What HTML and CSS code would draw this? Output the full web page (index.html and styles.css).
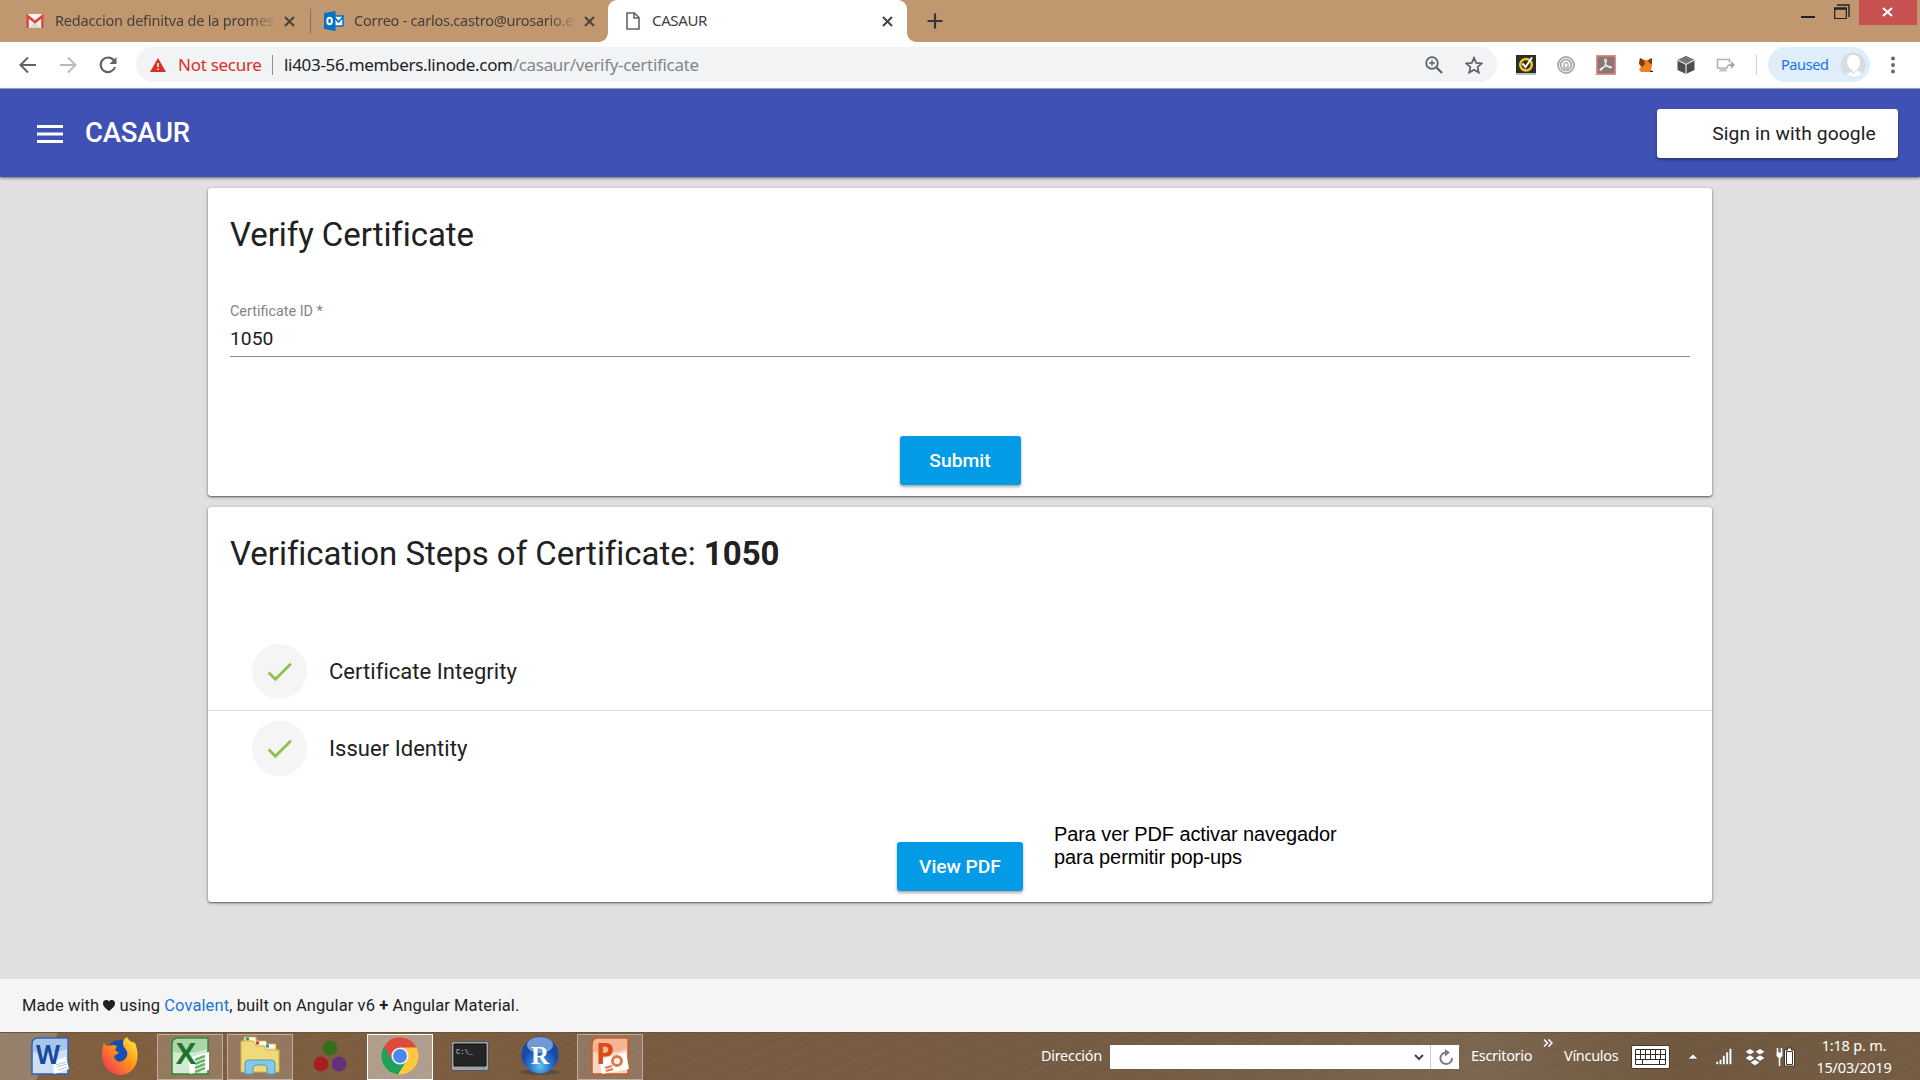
FILE: index.html
```html
<!DOCTYPE html>
<html lang="en">
<head>
<meta charset="utf-8">
<title>CASAUR</title>
<link rel="stylesheet" href="styles.css">
</head>
<body>
<div class="screen">
  <div class="tabs">
    <div class="tab tab-mail">
      <svg class="ico" width="18" height="16" viewBox="0 0 18 16"><rect width="18" height="14" y="1" rx="1" fill="#f3f1ee"/><path d="M3 15 9 9l6 6" fill="#ddd8d4"/><path d="M1.500 15V3L9 9l7.500-6v12" fill="none" stroke="#d9453a" stroke-width="2.600"/></svg>
      <span class="tab-text t1">Redaccion definitva de la promes</span>
      <svg class="x" width="11" height="11" viewBox="0 0 11 11"><path d="M1 1l9 9M10 1l-9 9"/></svg>
    </div>
    <div class="tab-sep"></div>
    <div class="tab tab-outlook">
      <svg class="ico" width="20" height="20" viewBox="0 0 20 20"><path d="M9 5h10v10H9z" fill="#fff" stroke="#0072c6" stroke-width="1.500"/><path d="M11 7l3.500 4L19 6" fill="none" stroke="#0072c6" stroke-width="1.800"/><path d="M0 2 11.500 0v20L0 18z" fill="#0072c6"/><ellipse cx="5.600" cy="10" rx="2.300" ry="3.200" fill="none" stroke="#fff" stroke-width="2"/></svg>
      <span class="tab-text t2">Correo - carlos.castro@urosario.e</span>
      <svg class="x" width="11" height="11" viewBox="0 0 11 11"><path d="M1 1l9 9M10 1l-9 9"/></svg>
    </div>
    <div class="tab tab-active">
      <svg class="ico" width="14" height="18" viewBox="0 0 14 18"><path d="M1 1h7.500L13 5.500V17H1zM8 1v5h5" fill="none" stroke="#5f6368" stroke-width="1.600"/></svg>
      <span class="tab-text t3">CASAUR</span>
      <svg class="x" width="11" height="11" viewBox="0 0 11 11"><path d="M1 1l9 9M10 1l-9 9"/></svg>
    </div>
    <svg class="plus" width="16" height="16" viewBox="0 0 16 16"><path d="M8 .5v15M.5 8h15" stroke="#32363a" stroke-width="2.200"/></svg>
    <div class="window-buttons">
      <svg width="14" height="20" viewBox="0 0 14 20"><path d="M0 17h14" stroke="#222" stroke-width="2"/></svg>
      <svg class="restore" width="16" height="16" viewBox="0 0 16 16"><path d="M3 1h12v12" fill="none" stroke="#222" stroke-width="1.400"/><path d="M.7 4.500h11.600v10H.7z" fill="none" stroke="#222" stroke-width="1.200"/><path d="M0 4.500h13" stroke="#222" stroke-width="2.500"/></svg>
      <div class="close"><svg width="11" height="10" viewBox="0 0 11 10"><path d="M1 1l9 8M10 1l-9 8" stroke="#fff" stroke-width="2.200"/></svg></div>
    </div>
  </div>

  <div class="toolbar">
    <svg class="nav-ico" width="18" height="18" viewBox="0 0 18 18"><path d="M17 9H2M9 1.500 1.500 9 9 16.500" fill="none" stroke="#5f6368" stroke-width="2"/></svg>
    <svg class="nav-ico" width="18" height="18" viewBox="0 0 18 18"><path d="M1 9h15M9 1.500 16.500 9 9 16.500" fill="none" stroke="#bababc" stroke-width="2"/></svg>
    <svg class="nav-ico" width="18" height="18" viewBox="0 0 18 18"><path d="M14.800 4.300A7.300 7.300 0 1 0 16 11" fill="none" stroke="#5f6368" stroke-width="2.200"/><path d="M17.500 1v7h-7z" fill="#5f6368"/></svg>
    <div class="omnibox">
      <svg width="16" height="14" viewBox="0 0 16 14"><path d="M8 0l8 14H0z" fill="#d93025"/><path d="M8 5v4M8 10.500v1.500" stroke="#fff" stroke-width="1.600"/></svg>
      <span class="not-secure">Not secure</span>
      <span class="url-sep"></span>
      <span class="url">li403-56.members.linode.com<span class="path">/casaur/verify-certificate</span></span>
      <svg class="mag" width="18" height="18" viewBox="0 0 18 18"><circle cx="7" cy="7" r="5.800" fill="none" stroke="#5f6368" stroke-width="1.800"/><path d="M11.500 11.500 17 17" stroke="#5f6368" stroke-width="2.200"/><path d="M4.200 7h5.600M7 4.200v5.600" stroke="#5f6368" stroke-width="1.400"/></svg>
      <svg width="18" height="18" viewBox="0 0 18 18"><path d="M9 1.800l2.200 5.100 5.600.5-4.200 3.700 1.200 5.500L9 13.700l-4.800 2.900 1.200-5.500L1.200 7.400l5.600-.5z" fill="none" stroke="#5f6368" stroke-width="1.700"/></svg>
    </div>
    <div class="extensions">
      <svg width="20" height="20" viewBox="0 0 20 20"><path d="M0 0h20v18H0z" fill="#2d2d2f"/><path d="M0 18h20v2H0z" fill="#bbb"/><circle cx="10" cy="9.700" r="5.800" fill="none" stroke="#f9c51c" stroke-width="2.500"/><path d="M6.500 8.500 9.500 12 16 2.500" fill="none" stroke="#fff" stroke-width="2"/></svg>
      <svg width="20" height="20" viewBox="0 0 20 20"><g fill="none" stroke="#acacac"><circle cx="10" cy="10" r="8" stroke-width="2"/><circle cx="10" cy="10" r="5.300" stroke-width="1.800"/></g><path d="M8 13V9.500a2 2 0 1 1 4 0V13z" fill="#fff" stroke="#888"/></svg>
      <svg width="20" height="20" viewBox="0 0 20 20"><path d="M.7.7h18.600v18.600H.7z" fill="#8a7775" stroke="#ef8c84" stroke-width="1.400"/><path d="M9.500 4c1.500 0 1 4-1 7s-4 5-4.500 4 3-3 6-3.500 6 0 5.500 1-4-.5-5.500-3-1.500-5.500-.5-5.500z" fill="none" stroke="#f2eeee" stroke-width="1.100"/></svg>
      <svg width="20" height="20" viewBox="0 0 20 20"><path d="M4 3l3 2h6l3-2v7l-1 5 2 1-3 1H5l-2-3 2-2-2-4z" fill="#ef8220"/><path d="M4 3l4 2 1 4-3 3-3-3zM12 5l4-2v6l-3-1z" fill="#763d16"/><path d="M14 16.500h3" stroke="#222"/></svg>
      <svg width="20" height="20" viewBox="0 0 20 20"><path d="M10 1l8.500 4v10L10 19l-8.500-4V5z" fill="#4d4d4f"/><path d="M2 5 10 1.300 18 5l-8 4z" fill="#777"/><path d="M1.500 5l8.500 4.500L18.500 5M10 9.500V19" fill="none" stroke="#eee" stroke-width="1.100"/></svg>
      <svg width="20" height="20" viewBox="0 0 20 20"><path d="M12 13H1.500V4.500h12v3" fill="none" stroke="#b3b3b3" stroke-width="1.600"/><path d="M3 16.500h8l-1-3H4z" fill="#c4c4c4"/><path d="M10 13c1-3 2-4 5-4V6l4 4-4 4v-3c-2 0-3 0-5 2z" fill="#a5a5a5"/></svg>
    </div>
    <span class="ext-sep"></span>
    <div class="profile"><span>Paused</span><svg width="26" height="26" viewBox="0 0 26 26"><circle cx="13" cy="13" r="12.500" fill="#d9dcdf"/><path d="M12 18c-6-2-7-15 1-15s9 10 4 15l5 4q-9 6-16 0l5-2z" fill="#fff"/><path d="M12 18l1 4 4-4" fill="none" stroke="#d5d8da"/></svg></div>
    <svg width="4" height="18" viewBox="0 0 4 18" fill="#5f6368"><circle cx="2" cy="2.500" r="1.900"/><circle cx="2" cy="9" r="1.900"/><circle cx="2" cy="15.500" r="1.900"/></svg>
  </div>

  <header class="app-bar">
    <svg width="26" height="18" viewBox="0 0 26 18"><path d="M0 1.500h26M0 9h26M0 16.500h26" stroke="#fff" stroke-width="2.800"/></svg>
    <span class="brand">CASAUR</span>
    <button class="google">Sign in with google</button>
  </header>

  <main class="content">
    <section class="card verify">
      <h1>Verify Certificate</h1>
      <label class="field"><span class="label">Certificate ID *</span><span class="value">1050</span></label>
      <button class="primary submit">Submit</button>
    </section>
    <section class="card steps">
      <h1>Verification Steps of Certificate: <b>1050</b></h1>
      <div class="list">
        <div class="row"><span class="avatar"><svg width="33" height="33" viewBox="0 0 24 24"><path d="M9 16.170 4.830 12l-1.420 1.410L9 19 21 7l-1.410-1.410z" fill="#8bc34a"/></svg></span><span>Certificate Integrity</span></div>
        <div class="row"><span class="avatar"><svg width="33" height="33" viewBox="0 0 24 24"><path d="M9 16.170 4.830 12l-1.420 1.410L9 19 21 7l-1.410-1.410z" fill="#8bc34a"/></svg></span><span>Issuer Identity</span></div>
      </div>
      <button class="primary pdf">View PDF</button>
      <p class="note">Para ver PDF activar navegador<br>para permitir pop-ups</p>
    </section>
  </main>

  <footer class="credits">
    <span>Made with <svg width="12" height="11" viewBox="0 0 12 11"><path d="M6 11C1 7 0 5.500 0 3.200 0 0 4 -1 6 1.500 8-1 12 0 12 3.200 12 5.500 11 7 6 11z" fill="#212121"/></svg> using <a>Covalent</a>, built on Angular v6 <b>+</b> Angular Material.</span>
  </footer>

  <div class="taskbar">
    <div class="apps">
      <div class="app"><svg width="38" height="38" viewBox="0 0 38 38"><path d="M7 1h30v36H1V8q0-7 6-7z" fill="#cfe0f5" stroke="#2d62b3" stroke-width="1.500"/><path d="M8 2h28v10Q20 18 2 15V8q0-6 6-6z" fill="#a8c6ec"/><path d="m22 24 13-4 3 12-15 5z" fill="#fff"/><text x="5" y="27" class="glyph" font-size="27" textLength="24" lengthAdjust="spacingAndGlyphs" fill="#174a9c">W</text><path d="m25 28 10-3m-9 5 10-3m-9 6 10-3" stroke="#b4c4dc"/></svg></div>
      <div class="app"><svg width="38" height="38" viewBox="0 0 38 38"><defs><linearGradient id="ff" x1="1" y1="0" x2="0" y2="1"><stop offset="0" stop-color="#fff34a"/><stop offset=".45" stop-color="#ff9417"/><stop offset="1" stop-color="#f0216a"/></linearGradient></defs><circle cx="19" cy="17" r="14" fill="#164fb2"/><path d="M3 6c1 2 2 2 3 3l6-1 4 1-2 4 4 3-5 3c1 6 6 7 10 4 5-4 4-9 0-13-2-4-1-8 3-10 2 4 5 5 8 6 6 13 2 32-15 32C2 37-2 19 3 6z" fill="url(#ff)"/></svg></div>
      <div class="app open"><svg width="38" height="38" viewBox="0 0 38 38"><path d="M7 1h30v36H1V8q0-7 6-7z" fill="#d2ead0" stroke="#31853a" stroke-width="1.500"/><path d="M8 2h28v10Q20 18 2 15V8q0-6 6-6z" fill="#abd6a6"/><path d="m17 21 21-6v18l-19 4z" fill="#fff"/><path d="m24 23 10-4m-10 8 10-4m-10 8 10-4m-10 8 10-4" stroke="#6ab36c" stroke-width="2.500"/><text x="5" y="27" class="glyph" font-size="28" textLength="20" lengthAdjust="spacingAndGlyphs" fill="#1f7331">X</text></svg></div>
      <div class="app open"><svg width="40" height="40" viewBox="0 0 40 40"><path d="M4 1h12l1 4h9l1 3h9v12H4z" fill="#f7e7aa" stroke="#c9a53c"/><path d="M7 3h8M18 7h8M27 10h8" stroke="#fff" stroke-width="3"/><path d="M6 3h3" stroke="#3a9c40" stroke-width="3"/><path d="M16 7h3" stroke="#d33" stroke-width="3"/><path d="M26 10h3" stroke="#278ac9" stroke-width="3"/><path d="M1 5h12l3 5h8l2 4h13v22H1z" fill="#f0d978" stroke="#d2b24c"/><path d="M5 38V27q0-3 4-3h22q4 0 4 3v11h-8v-6q0-3-3-3h-7q-4 0-4 3v6z" fill="#83c8e7" stroke="#479fca"/></svg></div>
      <div class="app"><svg width="34" height="34" viewBox="0 0 34 34"><circle cx="17" cy="9" r="7.500" fill="#36701b"/><circle cx="8" cy="25" r="7.500" fill="#a71e1c"/><circle cx="26" cy="25" r="7.500" fill="#65307b"/></svg></div>
      <div class="app open current"><svg width="38" height="38" viewBox="0 0 38 38"><circle cx="19" cy="19" r="18.500" fill="#fbc93e"/><path d="M19 19 3 9.500A18.500 18.500 0 0 0 17 37.400l8-13z" fill="#1ea15c"/><path d="M3 9.500A18.500 18.500 0 0 1 35.500 10.500H19l-8 12z" fill="#dd4b3e"/><circle cx="19" cy="19" r="8.600" fill="#f5f5f5"/><circle cx="19" cy="19" r="6.900" fill="#4a87ee"/></svg></div>
      <div class="app"><svg width="38" height="30" viewBox="0 0 38 30"><rect x=".5" y=".5" width="37" height="29" rx="2" fill="#a0a5a9" stroke="#55585b"/><path d="M3 3h32v22H3z" fill="#252525" stroke="#111"/><text x="5" y="13" class="console">C:\_</text><path d="M31 27.500h3" stroke="#3ca6e0" stroke-width="1.500"/></svg></div>
      <div class="app"><svg width="40" height="40" viewBox="0 0 40 40"><defs><radialGradient id="rg" cy=".8"><stop offset="0" stop-color="#63c5f2"/><stop offset=".6" stop-color="#286fc9"/><stop offset="1" stop-color="#174aa6"/></radialGradient></defs><ellipse cx="20" cy="36" rx="19" ry="3" fill="#5b4c3d"/><circle cx="20" cy="19" r="18.500" fill="url(#rg)"/><ellipse cx="20" cy="9" rx="13" ry="8" fill="#9fc4ea" opacity=".65"/><text x="20" y="28" class="r-glyph" text-anchor="middle">R</text></svg></div>
      <div class="app open"><svg width="38" height="38" viewBox="0 0 38 38"><path d="M7 1h30v36H1V8q0-7 6-7z" fill="#fbd6c3" stroke="#d05522" stroke-width="1.500"/><path d="M8 2h28v10Q20 18 2 15V8q0-6 6-6z" fill="#f5b492"/><path d="m8 23 27-8 3 17-27 5z" fill="#fff"/><text x="5" y="27" class="glyph" font-size="28" textLength="18" lengthAdjust="spacingAndGlyphs" fill="#d84a16">P</text><circle cx="26" cy="24" r="4.500" fill="none" stroke="#e27848" stroke-width="3"/><path d="m14 31 7-2m-6 5 7-2" stroke="#e27848" stroke-width="2"/></svg></div>
    </div>
    <span class="tb-text direccion">Dirección</span>
    <div class="address">
      <svg width="10" height="7" viewBox="0 0 10 7"><path d="M1 1l4 4 4-4" fill="none" stroke="#444" stroke-width="2"/></svg>
      <span class="reload"><svg width="16" height="17" viewBox="0 0 16 17"><path d="M8 3.500a5.800 5.800 0 1 0 6 5.500" fill="none" stroke="#7c7c7c" stroke-width="2"/><path d="M7 0l5 3.500-5 4z" fill="#7c7c7c"/></svg></span>
    </div>
    <span class="tb-text escritorio">Escritorio</span>
    <svg class="more" width="10" height="8" viewBox="0 0 10 8"><path d="M1 .5 4.500 4 1 7.500M5.500.5 9 4 5.500 7.500" fill="none" stroke="#fff" stroke-width="1.500"/></svg>
    <span class="tb-text vinculos">Vínculos</span>
    <div class="tray">
      <svg width="40" height="24" viewBox="0 0 40 24"><rect x=".5" y=".5" width="38" height="23" rx="1.500" fill="#fff" stroke="#443a31"/><path d="M4.500 4.500h30v15h-30zM4.500 9.500h30M4.500 14.500h30M9.500 4.500v10M14.500 4.500v10M19.500 4.500v10M24.500 4.500v10M29.500 4.500v10M11.500 14.500v5M28.500 14.500v5" fill="none" stroke="#332d26"/></svg>
      <svg class="tri" width="12" height="8" viewBox="0 0 12 8"><path d="M6 1 11 6H1z" fill="#fff" stroke="#50483f" stroke-width=".7"/></svg>
      <svg class="signal" width="18" height="19" viewBox="0 0 18 19"><path d="M1 17.500v-3h2.500v3zm3.300 0v-5h2.500v5zm3.300 0V8.500h2.500v9zm3.300 0V5h2.500v12.500zm3.300 0v-16h2.500v16z" fill="#fff" stroke="#3f362e" stroke-width=".4"/></svg>
      <svg class="dropbox" width="20" height="18" viewBox="0 0 20 18"><path d="M5 .5 10 3.700 5 7 0 3.700zm10 0 5 3.200L15 7l-5-3.300zM5 6.800l5 3.200-5 3.300L0 10zm10 0L20 10l-5 3.300L10 10zm-5 4.500 5 3.200-5 3.200-5-3.200z" fill="#fff" stroke="#40372f" stroke-width=".6"/></svg>
      <svg class="battery" width="20" height="20" viewBox="0 0 20 20"><path d="M8.500 3h3V1h4v2h3v16h-10z" fill="#fff" stroke="#3f362e"/><path d="M10.500 4.500h6v13h-6z" fill="none" stroke="#3f362e"/><path d="M3.500 10v9M1.500 1v5m4-5v5" stroke="#fff" stroke-width="1.500"/><path d="M.5 5.500h6V9l-3 3-3-3z" fill="#fff"/></svg>
    </div>
    <div class="tb-text clock"><span class="time">1:18 p. m.</span><span class="date">15/03/2019</span></div>
  </div>
</div>
</body>
</html>
```
FILE: styles.css
```css
* { box-sizing: border-box; }
body { margin: 0; }
svg { display: block; flex: none; }
.screen { width: 1920px; height: 1080px; overflow: hidden; display: flex; flex-direction: column; background: #e0e0e0; font-family: Roboto, sans-serif; color: #212121; }

/* browser chrome */
.tabs { height: 42px; flex: none; display: flex; background: #c19770; font-family: "Noto Sans", sans-serif; }
.tab { display: flex; align-items: center; height: 42px; }
.tab-mail { width: 310px; padding-left: 26px; }
.tab-outlook { width: 297px; padding-left: 13px; }
.tab-sep { width: 1px; height: 25px; margin-top: 9px; background: #8e7054; }
.tab-active { position: relative; width: 299px; padding-left: 18px; background: #fff; border-radius: 9px 9px 0 0; }
.tab-active::before, .tab-active::after { content: ""; position: absolute; bottom: 0; width: 9px; height: 9px; }
.tab-active::before { left: -9px; background: radial-gradient(circle at 0 0, transparent 8.500px, #fff 9px); }
.tab-active::after { right: -9px; background: radial-gradient(circle at 100% 0, transparent 8.500px, #fff 9px); }
.tab-text { font-size: 14.500px; line-height: 20px; white-space: nowrap; color: #453f39; margin-top: -2px; }
.t1, .t2 { -webkit-mask-image: linear-gradient(90deg, #000 88%, rgba(0,0,0,.2)); mask-image: linear-gradient(90deg, #000 88%, rgba(0,0,0,.2)); }
.t1 { width: 218px; margin-left: 11px; letter-spacing: -.2px; }
.t2 { width: 219px; margin-left: 10px; letter-spacing: -.24px; }
.t3 { width: 222px; margin-left: 12px; font-size: 15px; letter-spacing: -.35px; color: #3c4043; }
.x { margin-left: 11px; fill: none; stroke: #46423e; stroke-width: 2; }
.t3 + .x { margin-left: 8px; }
.plus { margin: 13px 0 0 20px; }
.window-buttons { margin-left: auto; display: flex; }
.restore { margin: 4px 9px 0 19px; }
.close { width: 58px; height: 25px; margin-right: 3px; background: #c75050; display: flex; align-items: center; justify-content: center; padding: 0 2px 2px 0; }
.toolbar { height: 47px; flex: none; display: flex; align-items: center; padding: 0 22px 1px 19px; background: #fff; border-bottom: 1px solid #b0b0b0; font-family: "Noto Sans", sans-serif; }
.nav-ico { margin-right: 22px; }
.omnibox { width: 1361px; height: 35px; margin-left: -3px; border-radius: 18px; background: #f1f3f4; display: flex; align-items: center; padding: 0 14px 0 14px; font-size: 17px; line-height: 24px; white-space: nowrap; }
.not-secure { width: 84px; margin: 0 0 0 12px; color: #d93025; letter-spacing: -.28px; }
.url-sep { width: 1px; height: 20px; margin: 0 11px 0 10px; background: #8d9195; }
.url { color: #202124; letter-spacing: -.31px; }
.path { color: #80868b; }
.mag { margin-left: auto; margin-right: 22px; }
.extensions { display: flex; gap: 20px; margin-left: 19px; }
.ext-sep { width: 1px; height: 20px; margin: 0 11px 0 20px; background: #ccc; }
.profile { width: 102px; height: 35px; margin-right: 21px; border-radius: 18px; background: #e0edfb; display: flex; align-items: center; justify-content: space-between; padding: 0 4px 0 13px; color: #1a73e8; font-size: 14.500px; line-height: 20px; letter-spacing: -.4px; }
.profile span { margin-top: -1px; }

/* application */
.app-bar { height: 88px; flex: none; position: relative; display: flex; align-items: center; padding: 0 22px 0 37px; background: #3f51b5; color: #fff; box-shadow: 0 1px 3px rgba(0,0,0,.55); }
.app-bar > svg { margin-top: 2px; }
.brand { margin: -1px 0 0 22px; font-size: 27.500px; font-weight: 500; line-height: 36px; letter-spacing: -.2px; }
button { border: 0; height: 49px; border-radius: 3px; font-family: Roboto, sans-serif; font-size: 19.250px; box-shadow: 0 2px 3px rgba(0,0,0,.35); padding: 0; }
.google { width: 241px; margin-left: auto; padding-left: 33px; background: #fff; color: #212121; letter-spacing: .1px; }
.primary { align-self: center; background: #039be5; color: #fff; font-weight: 500; flex: none; }
.content { height: 802px; flex: none; display: flex; flex-direction: column; align-items: center; gap: 11px; padding-top: 11px; }
.card { width: 1504px; flex: none; display: flex; flex-direction: column; background: #fff; border-radius: 3px; box-shadow: 0 1px 2px rgba(0,0,0,.5), 0 1px 4px rgba(0,0,0,.2); }
.verify { height: 308px; padding: 22px 22px 11px; }
.steps { position: relative; height: 395px; padding-bottom: 11px; }
h1 { margin: 0; font-size: 33px; font-weight: 400; line-height: 49px; letter-spacing: -.06px; }
b { font-weight: 700; }
.field { height: 52px; margin-top: 46px; border-bottom: 1px solid #8c8c8c; display: flex; flex-direction: column; }
.label { font-size: 14.400px; line-height: 14px; color: #858585; }
.value { font-size: 19.250px; line-height: 22px; margin-top: 9px; }
.submit { width: 121px; margin-top: auto; }
.steps h1 { padding: 22px 22px 0; letter-spacing: -.03px; }
.list { margin-top: 55px; font-size: 22px; letter-spacing: .04px; }
.row { height: 77px; padding-left: 44px; display: flex; align-items: center; gap: 22px; }
.row + .row { box-shadow: inset 0 1px #ddd; }
.avatar { width: 55px; height: 55px; border-radius: 50%; background: #f5f5f5; display: flex; align-items: center; justify-content: center; }
.pdf { width: 126px; margin-top: auto; letter-spacing: -.05px; }
.note { position: absolute; left: 846px; top: 316px; margin: 0; color: #000; font: 20px/23px "Liberation Sans", sans-serif; letter-spacing: -.1px; white-space: nowrap; }
.credits { height: 53px; flex: none; display: flex; align-items: center; padding-left: 22px; background: #f5f5f5; font-size: 16.500px; letter-spacing: .09px; white-space: nowrap; }
.credits svg { display: inline-block; }
.credits a { color: #1976d2; }

/* taskbar */
.taskbar { height: 48px; flex: none; display: flex; align-items: center; border-top: 1px solid #6b5541; color: #fff; background: repeating-linear-gradient(158deg, rgba(255,240,220,.012) 0 3px, transparent 5px 11px, rgba(0,0,0,.015) 13px 15px), linear-gradient(115deg, #95816b 0 52px, transparent 53px), linear-gradient(90deg, #82603f, #795b40 35%, #745c45 60%, #7b6650 77%, #70583f 88%, #755d45); }
.apps { width: 1041px; flex: none; display: flex; gap: 4px; padding-left: 17px; }
.app { width: 66px; height: 46px; display: flex; align-items: center; justify-content: center; padding-bottom: 2px; border: 1px solid transparent; }
.open { background: rgba(255,255,255,.17); border-color: rgba(255,255,255,.4); }
.current { background: rgba(255,255,255,.4); border-color: #fff; }
.glyph { font-family: "Open Sans", sans-serif; font-weight: 700; }
.console { font: 7px "Liberation Mono", monospace; fill: #ddd; }
.r-glyph { font: 700 25px "Liberation Serif", serif; fill: #fff; }
.tb-text { font-family: "Noto Sans", sans-serif; font-size: 14.500px; line-height: 20px; letter-spacing: -.3px; white-space: nowrap; flex: none; }
.direccion, .escritorio, .vinculos { margin-top: -3px; }
.direccion { width: 69px; }
.address { width: 349px; height: 24px; margin-top: 1px; background: #fff; display: flex; align-items: center; justify-content: flex-end; }
.reload { width: 29px; height: 24px; margin-left: 6px; padding-left: 1px; border-left: 1px solid #ccc; display: flex; align-items: center; justify-content: center; }
.escritorio { width: 63px; margin-left: 12px; }
.more { align-self: flex-start; margin: 6px 11px 0 9px; }
.vinculos { width: 56px; }
.tray { display: flex; align-items: center; margin-left: 11px; }
.tri { margin-left: 16px; }
.signal { margin-left: 16px; }
.dropbox { margin-left: 12px; }
.battery { margin-left: 11px; }
.clock { width: 80px; margin: -1px 0 0 18px; display: flex; flex-direction: column; align-items: center; line-height: 22px; letter-spacing: -.2px; }
```
